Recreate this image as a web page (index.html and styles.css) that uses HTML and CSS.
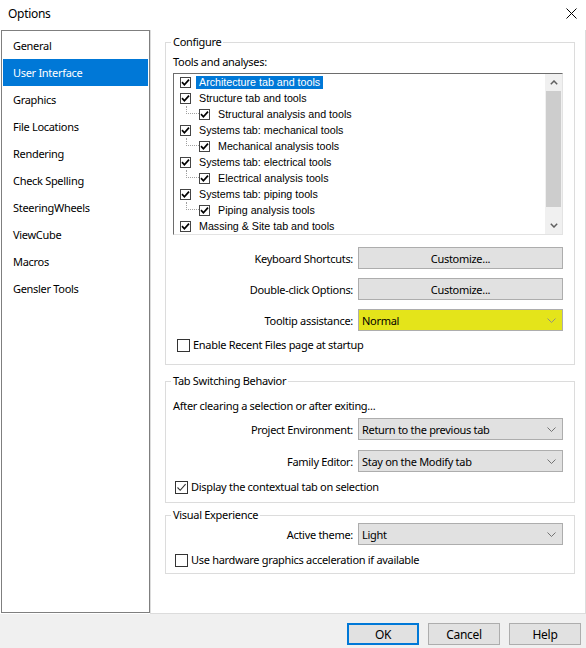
FILE: index.html
```html
<!DOCTYPE html>
<html>
<head>
<meta charset="utf-8">
<title>Options</title>
<link rel="stylesheet" href="styles.css">
</head>
<body>
<div class="window">
  <div class="titlebar">
    <span class="title">Options</span>
    <span class="close"><svg width="11" height="11" viewBox="0 0 11 11"><path d="M0.5 0.5 L10.5 10.5 M10.5 0.5 L0.5 10.5" stroke="#000" stroke-width="1" fill="none"/></svg></span>
  </div>
  <div class="main">
    <ul class="nav">
      <li>General</li>
      <li class="sel">User Interface</li>
      <li>Graphics</li>
      <li>File Locations</li>
      <li>Rendering</li>
      <li>Check Spelling</li>
      <li>SteeringWheels</li>
      <li>ViewCube</li>
      <li>Macros</li>
      <li>Gensler Tools</li>
    </ul>
    <div class="panel">
      <fieldset class="group g-config">
        <legend>Configure</legend>
        <div class="caption">Tools and analyses:</div>
        <div class="tree">
          <div class="tree-rows">
            <div class="trow"><span class="tcb"><svg width="9" height="9" viewBox="0 0 9 9"><path d="M1 4.2 L3.4 6.8 L8 1.6" stroke="#000" stroke-width="1.7" fill="none"/></svg></span><span class="tlabel sel">Architecture tab and tools</span></div>
            <div class="trow"><span class="tcb"><svg width="9" height="9" viewBox="0 0 9 9"><path d="M1 4.2 L3.4 6.8 L8 1.6" stroke="#000" stroke-width="1.7" fill="none"/></svg></span><span class="tlabel">Structure tab and tools</span></div>
            <div class="trow"><span class="branch"></span><span class="tcb"><svg width="9" height="9" viewBox="0 0 9 9"><path d="M1 4.2 L3.4 6.8 L8 1.6" stroke="#000" stroke-width="1.7" fill="none"/></svg></span><span class="tlabel">Structural analysis and tools</span></div>
            <div class="trow"><span class="tcb"><svg width="9" height="9" viewBox="0 0 9 9"><path d="M1 4.2 L3.4 6.8 L8 1.6" stroke="#000" stroke-width="1.7" fill="none"/></svg></span><span class="tlabel">Systems tab: mechanical tools</span></div>
            <div class="trow"><span class="branch"></span><span class="tcb"><svg width="9" height="9" viewBox="0 0 9 9"><path d="M1 4.2 L3.4 6.8 L8 1.6" stroke="#000" stroke-width="1.7" fill="none"/></svg></span><span class="tlabel">Mechanical analysis tools</span></div>
            <div class="trow"><span class="tcb"><svg width="9" height="9" viewBox="0 0 9 9"><path d="M1 4.2 L3.4 6.8 L8 1.6" stroke="#000" stroke-width="1.7" fill="none"/></svg></span><span class="tlabel">Systems tab: electrical tools</span></div>
            <div class="trow"><span class="branch"></span><span class="tcb"><svg width="9" height="9" viewBox="0 0 9 9"><path d="M1 4.2 L3.4 6.8 L8 1.6" stroke="#000" stroke-width="1.7" fill="none"/></svg></span><span class="tlabel">Electrical analysis tools</span></div>
            <div class="trow"><span class="tcb"><svg width="9" height="9" viewBox="0 0 9 9"><path d="M1 4.2 L3.4 6.8 L8 1.6" stroke="#000" stroke-width="1.7" fill="none"/></svg></span><span class="tlabel">Systems tab: piping tools</span></div>
            <div class="trow"><span class="branch"></span><span class="tcb"><svg width="9" height="9" viewBox="0 0 9 9"><path d="M1 4.2 L3.4 6.8 L8 1.6" stroke="#000" stroke-width="1.7" fill="none"/></svg></span><span class="tlabel">Piping analysis tools</span></div>
            <div class="trow"><span class="tcb"><svg width="9" height="9" viewBox="0 0 9 9"><path d="M1 4.2 L3.4 6.8 L8 1.6" stroke="#000" stroke-width="1.7" fill="none"/></svg></span><span class="tlabel">Massing &amp; Site tab and tools</span></div>
          </div>
          <div class="vscroll">
            <div class="arrow"><svg width="8" height="5" viewBox="0 0 8 5"><path d="M0.8 4.2 L4 1 L7.2 4.2" stroke="#606060" stroke-width="1.5" fill="none"/></svg></div>
            <div class="thumb"></div>
            <div class="track"></div>
            <div class="arrow"><svg width="8" height="5" viewBox="0 0 8 5"><path d="M0.8 0.8 L4 4 L7.2 0.8" stroke="#606060" stroke-width="1.5" fill="none"/></svg></div>
          </div>
        </div>
        <div class="form f1">
          <label>Keyboard Shortcuts:</label>
          <button class="btn">Customize...</button>
          <label>Double-click Options:</label>
          <button class="btn">Customize...</button>
          <label>Tooltip assistance:</label>
          <div class="select hl"><span>Normal</span><svg width="9" height="5" viewBox="0 0 9 5"><path d="M0.5 0.5 L4.5 4.5 L8.5 0.5" stroke="#888" stroke-width="0.9" fill="none"/></svg></div>
        </div>
        <div class="check c1"><span class="cb"></span><span>Enable Recent Files page at startup</span></div>
      </fieldset>

      <fieldset class="group g-tab">
        <legend>Tab Switching Behavior</legend>
        <div class="caption">After clearing a selection or after exiting...</div>
        <div class="form f2">
          <label>Project Environment:</label>
          <div class="select"><span>Return to the previous tab</span><svg width="9" height="5" viewBox="0 0 9 5"><path d="M0.5 0.5 L4.5 4.5 L8.5 0.5" stroke="#666" stroke-width="0.9" fill="none"/></svg></div>
          <label>Family Editor:</label>
          <div class="select"><span>Stay on the Modify tab</span><svg width="9" height="5" viewBox="0 0 9 5"><path d="M0.5 0.5 L4.5 4.5 L8.5 0.5" stroke="#666" stroke-width="0.9" fill="none"/></svg></div>
        </div>
        <div class="check c2"><span class="cb"><svg width="11" height="11" viewBox="0 0 11 11"><path d="M1.5 5.5 L4.2 8.3 L9.6 2.2" stroke="#333" stroke-width="1.1" fill="none"/></svg></span><span>Display the contextual tab on selection</span></div>
      </fieldset>

      <fieldset class="group g-vis">
        <legend>Visual Experience</legend>
        <div class="form f3">
          <label>Active theme:</label>
          <div class="select"><span>Light</span><svg width="9" height="5" viewBox="0 0 9 5"><path d="M0.5 0.5 L4.5 4.5 L8.5 0.5" stroke="#666" stroke-width="0.9" fill="none"/></svg></div>
        </div>
        <div class="check c2"><span class="cb"></span><span>Use hardware graphics acceleration if available</span></div>
      </fieldset>
    </div>
  </div>
  <div class="footer">
    <button class="btn fbtn default">OK</button>
    <button class="btn fbtn">Cancel</button>
    <button class="btn fbtn">Help</button>
  </div>
</div>
</body>
</html>
```

FILE: styles.css
```css
html, body {
  margin: 0;
  padding: 0;
}
body {
  width: 586px;
  height: 648px;
  overflow: hidden;
  background: #fff;
  font-family: "Noto Sans", "Open Sans", sans-serif;
  font-size: 11px;
  letter-spacing: -0.3px;
  color: #000;
}
.window {
  display: flex;
  flex-direction: column;
  height: 648px;
}
.titlebar {
  height: 30px;
  box-sizing: border-box;
  display: flex;
  align-items: center;
  justify-content: space-between;
  padding: 0 8px 3px 8px;
}
.title {
  font-size: 12px;
}
.close {
  display: flex;
  margin-right: 1px;
}
.main {
  display: flex;
  height: 584px;
}
.nav {
  list-style: none;
  margin: 0 0 1px 1px;
  padding: 1px 0 0 0;
  width: 149px;
  box-sizing: border-box;
  border: 1px solid #7f7f7f;
}
.nav li {
  height: 27px;
  line-height: 28px;
  margin: 0 1px;
  padding-left: 10px;
}
.nav li.sel {
  background: #0078d7;
  color: #fff;
}
.panel {
  flex: 1;
  border-left: 1px solid #dcdcdc;
  border-right: 1px solid #dcdcdc;
  border-bottom: 1px solid #dcdcdc;
  padding: 0 10px 0 14px;
}
.group {
  margin: 0;
  border: 1px solid #dcdcdc;
  min-inline-size: 0;
}
.group legend {
  line-height: 16px;
  padding: 0 2px;
  margin-left: -2px;
}
.caption {
  line-height: 16px;
}
.g-config {
  margin-top: 4px;
  padding: 4px 11px 11px 7px;
}
.g-tab {
  margin-top: 8px;
  padding: 9px 11px 7px 7px;
}
.g-vis {
  margin-top: 4px;
  padding: 0 11px 5px 7px;
}
.tree {
  margin-top: 3px;
  height: 162px;
  box-sizing: border-box;
  border: 1px solid;
  border-color: #6d6d6d #e3e3e3 #e3e3e3 #6d6d6d;
  display: flex;
  font-family: "Liberation Sans", Arial, sans-serif;
  font-size: 10.7px;
  letter-spacing: 0;
}
.tree-rows {
  flex: 1;
}
.trow {
  height: 16px;
  display: flex;
  align-items: center;
  padding-left: 6px;
}
.tcb {
  width: 11px;
  height: 11px;
  box-sizing: border-box;
  border: 1px solid #444;
  background: #fff;
  margin-right: 5px;
  display: flex;
  align-items: center;
  justify-content: center;
}
.tlabel {
  padding: 0 3px;
  line-height: 13px;
  white-space: nowrap;
}
.tlabel.sel {
  background: #0078d7;
  color: #fff;
}
.branch {
  align-self: flex-start;
  width: 13px;
  height: 8px;
  margin-left: 6px;
  box-sizing: border-box;
  border-left: 1px dotted #a0a0a0;
  border-bottom: 1px dotted #a0a0a0;
}
.vscroll {
  width: 17px;
  display: flex;
  flex-direction: column;
  background: #f0f0f0;
}
.arrow {
  height: 17px;
  display: flex;
  align-items: center;
  justify-content: center;
}
.thumb {
  height: 116px;
  margin: 0 1px;
  background: #cdcdcd;
}
.track {
  flex: 1;
}
.form {
  display: grid;
  grid-template-columns: 1fr 205px;
  column-gap: 5px;
  align-items: center;
}
.form label {
  text-align: right;
  white-space: nowrap;
}
.f1 {
  margin-top: 12px;
  row-gap: 9px;
}
.f2 {
  margin-top: 4px;
  row-gap: 10px;
}
.f3 {
  margin-top: 0;
}
.btn {
  height: 22px;
  box-sizing: border-box;
  border: 1px solid #adadad;
  background: #e1e1e1;
  font: inherit;
  letter-spacing: inherit;
  color: #000;
  padding: 0;
  margin: 0;
}
.select {
  height: 22px;
  box-sizing: border-box;
  border: 1px solid #adadad;
  background: #e1e1e1;
  display: flex;
  align-items: center;
  justify-content: space-between;
  padding: 0 6px 0 3px;
}
.select.hl {
  background: #e4e41a;
}
.check {
  display: flex;
  align-items: center;
  line-height: 16px;
}
.c1 {
  margin-top: 6px;
  margin-left: 4px;
}
.c2 {
  margin-top: 7px;
  margin-left: 2px;
}
.cb {
  width: 13px;
  height: 13px;
  box-sizing: border-box;
  border: 1px solid #333;
  background: #fff;
  margin-right: 3px;
  display: flex;
  align-items: center;
  justify-content: center;
}
.footer {
  height: 34px;
  box-sizing: border-box;
  background: #f0f0f0;
  display: flex;
  justify-content: flex-end;
  align-items: flex-start;
  gap: 9px;
  padding: 9px 5px 0 0;
}
.fbtn {
  width: 72px;
  font-size: 12px;
}
.fbtn.default {
  border: 2px solid #0078d7;
}
```
